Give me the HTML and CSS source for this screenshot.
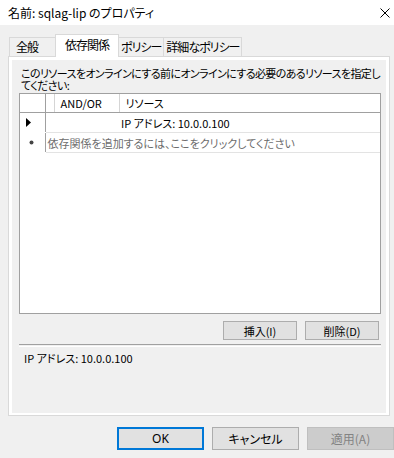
FILE: index.html
```html
<!DOCTYPE html>
<html lang="ja">
<head>
  <meta charset="UTF-8">
  <title>名前: sqlag-lip のプロパティ</title>
  <link rel="stylesheet" href="styles.css">
</head>
<body>

<div class="titlebar">
  <span class="title">名前: sqlag-lip のプロパティ</span>
  <span class="close">
    <svg width="10" height="10" viewBox="0 0 10 10"><path d="M0.5 0.5 L9.5 9.5 M9.5 0.5 L0.5 9.5" stroke="#000" stroke-width="1" fill="none"/></svg>
  </span>
</div>

<div class="tabs">
  <div class="tab">全般</div>
  <div class="tab active">依存関係</div>
  <div class="tab">ポリシー</div>
  <div class="tab">詳細なポリシー</div>
</div>

<div class="panel">
  <div class="page">
    <p class="hint">このリソースをオンラインにする前にオンラインにする必要のあるリソースを指定し<br>てください:</p>

    <div class="grid">
      <table>
        <colgroup>
          <col class="col-select">
          <col class="col-blank">
          <col class="col-op">
          <col>
        </colgroup>
        <thead>
          <tr>
            <th></th>
            <th></th>
            <th>AND/OR</th>
            <th>リソース</th>
          </tr>
        </thead>
        <tbody>
          <tr>
            <td class="row-head">
              <svg width="5" height="9" viewBox="0 0 5 9"><path d="M0 0 L5 4.5 L0 9 Z" fill="#000"/></svg>
            </td>
            <td></td>
            <td></td>
            <td class="resource">IP アドレス: 10.0.0.100</td>
          </tr>
          <tr class="new-row">
            <td class="row-head">
              <svg width="5" height="5" viewBox="0 0 5 5"><circle cx="2.5" cy="2.5" r="2" fill="#444"/></svg>
            </td>
            <td colspan="3"><span class="placeholder">依存関係を追加するには、ここをクリックしてください</span></td>
          </tr>
        </tbody>
      </table>
    </div>

    <div class="grid-buttons">
      <button>挿入(I)</button>
      <button>削除(D)</button>
    </div>

    <div class="separator"></div>

    <div class="expression">IP アドレス: 10.0.0.100</div>
  </div>
</div>

<div class="footer">
  <button class="default">OK</button>
  <button>キャンセル</button>
  <button disabled>適用(A)</button>
</div>

</body>
</html>
```

FILE: styles.css
```css
/* ダイアログ全体 */
body {
  margin: 0;
  width: 394px;
  height: 458px;
  overflow: hidden;
  background-color: #f0f0f0;
  font-family: "Noto Sans CJK JP", sans-serif;
  font-feature-settings: "palt";
  font-size: 11px;
  color: #000;
}

/* タイトルバー */
.titlebar {
  height: 25px;
  background-color: #fff;
  display: flex;
  align-items: center;
  justify-content: space-between;
  padding: 0 4px 0 8px;
}

.title {
  font-size: 12px;
}

.close svg {
  display: block;
}

/* タブ */
.tabs {
  display: flex;
  align-items: flex-end;
  height: 22px;
  margin-top: 9px;
  padding-left: 9px;
}

.tab {
  box-sizing: border-box;
  height: 19px;
  line-height: 18px;
  padding: 0 2px;
  border: 1px solid #d9d9d9;
  border-bottom: none;
  margin-left: -1px;
  font-size: 12px;
  letter-spacing: -1px;
  text-align: center;
  white-space: nowrap;
}

.tab:first-child {
  margin-left: 0;
  min-width: 47px;
  padding-left: 6px;
  text-align: left;
}

.tab.active {
  position: relative;
  z-index: 1;
  height: 23px;
  margin-bottom: -1px;
  line-height: 19px;
  padding: 0 9px;
  background-color: #fff;
}

/* タブページ */
.panel {
  margin: 0 4px 0 8px;
  padding: 3px 3px 2px 3px;
  border: 1px solid #d9d9d9;
  background-color: #fff;
}

.page {
  height: 353px;
  padding: 0 5px 0 7px;
  background-color: #f0f0f0;
}

.hint {
  margin: 0;
  padding: 7px 0 0 2px;
  line-height: 12px;
  letter-spacing: -0.6px;
  white-space: nowrap;
}

/* 依存関係グリッド */
.grid {
  box-sizing: border-box;
  height: 221px;
  margin-top: 2px;
  border: 1px solid #a0a0a0;
  background-color: #fff;
}

table {
  width: 100%;
  border-collapse: collapse;
  table-layout: fixed;
}

.col-select {
  width: 25px;
}

.col-blank {
  width: 9px;
}

.col-op {
  width: 65px;
}

th {
  height: 18px;
  padding: 0 0 0 6px;
  font-weight: normal;
  text-align: left;
  border-right: 1px solid #d5d5d5;
  border-bottom: 1px solid #a0a0a0;
}

th:first-child {
  border-right-color: #a0a0a0;
}

th:last-child {
  border-right: none;
}

td {
  height: 19px;
  padding: 0 0 0 2px;
  border-bottom: 1px solid #e3e3e3;
}

td.row-head {
  padding: 0 0 0 6px;
  border-right: 1px solid #a0a0a0;
  border-bottom-color: #fff;
}

td.row-head svg {
  display: block;
}

.new-row .row-head {
  padding-left: 9px;
}

.placeholder {
  color: #6d6d6d;
}

/* グリッドのボタン */
.grid-buttons {
  display: flex;
  justify-content: flex-end;
  gap: 8px;
  margin-top: 7px;
  padding-right: 2px;
}

button {
  box-sizing: border-box;
  font-family: "Noto Sans CJK JP", sans-serif;
  font-feature-settings: "palt";
  color: #000;
  background-color: #e1e1e1;
  border: 1px solid #adadad;
  padding: 0;
}

.grid-buttons button {
  width: 74px;
  height: 19px;
  font-size: 11px;
}

.separator {
  margin-top: 4px;
  border-top: 1px solid #a0a0a0;
  border-bottom: 1px solid #fff;
  height: 1px;
}

.expression {
  margin-top: 6px;
  padding-left: 5px;
  line-height: 11px;
}

/* OK / キャンセル / 適用 */
.footer {
  display: flex;
  justify-content: flex-end;
  gap: 8px;
  margin-top: 11px;
}

.footer button {
  width: 87px;
  height: 23px;
  font-size: 12px;
}

.footer button.default {
  border: 2px solid #0078d7;
  font-family: "Noto Sans", sans-serif;
}

.footer button:disabled {
  background-color: #cccccc;
  border-color: #bfbfbf;
  color: #838383;
}
```
